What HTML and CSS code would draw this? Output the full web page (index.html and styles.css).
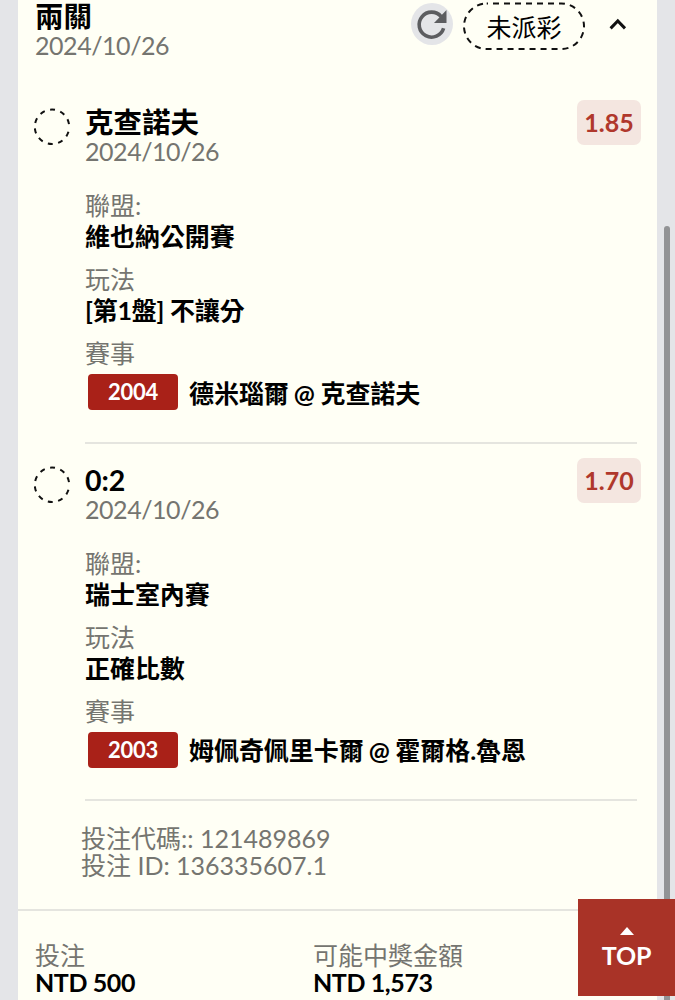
FILE: index.html
```html
<!DOCTYPE html>
<html lang="zh-Hant">
<head>
    <meta charset="UTF-8">
    <meta name="viewport" content="width=device-width, initial-scale=1.0">
    <title>投注紀錄</title>
    <link rel="stylesheet" href="styles.css">
</head>
<body>
    <div class="card">
        <div class="card-header">
            <div class="heading">
                <div class="title">兩關</div>
                <div class="date">2024/10/26</div>
            </div>
            <div class="refresh">
                <svg width="43" height="43" viewBox="0 0 43 43">
                    <path d="M32.6 25.3 A12.5 12.5 0 1 1 30.2 13.6" fill="none" stroke="#5c5d60" stroke-width="3.6"/>
                    <path d="M35.5 7 V20 H23 Z" fill="#5c5d60"/>
                </svg>
            </div>
            <div class="status">
                <svg class="status-outline" width="122" height="48" viewBox="0 0 122 48">
                    <rect x="1" y="1.5" width="120" height="45.5" rx="22.7"/>
                </svg>
                未派彩
            </div>
            <svg class="chevron" width="18" height="12" viewBox="0 0 18 12">
                <path d="M1.6 10.4 L8.8 3 L16 10.4"/>
            </svg>
        </div>

        <div class="bet">
            <svg class="pending" width="37" height="37" viewBox="0 0 37 37">
                <circle cx="18" cy="18.8" r="17.2"/>
            </svg>
            <div class="bet-body">
                <div class="title">克查諾夫</div>
                <div class="date">2024/10/26</div>
                <div class="field">
                    <div class="label">聯盟:</div>
                    <div class="value">維也納公開賽</div>
                </div>
                <div class="field">
                    <div class="label">玩法</div>
                    <div class="value tight">[第1盤] 不讓分</div>
                </div>
                <div class="field">
                    <div class="label">賽事</div>
                    <div class="match"><span class="match-id">2004</span><span class="value">德米瑙爾 <span class="at">@</span> 克查諾夫</span></div>
                </div>
            </div>
            <div class="odds">1.85</div>
        </div>

        <div class="bet">
            <svg class="pending" width="37" height="37" viewBox="0 0 37 37">
                <circle cx="18" cy="18.8" r="17.2"/>
            </svg>
            <div class="bet-body">
                <div class="title">0:2</div>
                <div class="date">2024/10/26</div>
                <div class="field">
                    <div class="label">聯盟:</div>
                    <div class="value">瑞士室內賽</div>
                </div>
                <div class="field">
                    <div class="label">玩法</div>
                    <div class="value">正確比數</div>
                </div>
                <div class="field">
                    <div class="label">賽事</div>
                    <div class="match"><span class="match-id">2003</span><span class="value">姆佩奇佩里卡爾 <span class="at">@</span> 霍爾格.魯恩</span></div>
                </div>
            </div>
            <div class="odds">1.70</div>
        </div>

        <div class="codes">
            <div>投注代碼:: 121489869</div>
            <div>投注 ID: 136335607.1</div>
        </div>

        <div class="totals">
            <div>
                <div class="label">投注</div>
                <div class="amount">NTD 500</div>
            </div>
            <div>
                <div class="label">可能中獎金額</div>
                <div class="amount">NTD 1,573</div>
            </div>
        </div>
    </div>

    <div class="scrollbar"></div>
    <div class="to-top">
        <div class="arrow"></div>
        TOP
    </div>
</body>
</html>
```

FILE: styles.css
```css
* {
    box-sizing: border-box;
}
body {
    margin: 0;
    height: 1000px;
    overflow: hidden;
    background: #e4e5e8;
    color: #000;
    font-family: Lato, "Noto Sans CJK TC", sans-serif;
    font-size: 25px;
}
.card {
    width: 639px;
    height: 1000px;
    margin-left: 18px;
    background: #fffff5;
}
.card-header {
    display: flex;
    align-items: flex-start;
    height: 100px;
    padding: 2px 30px 0 17px;
}
.heading {
    flex: 1;
    margin-top: -1px;
}
.title {
    font-size: 28.5px;
    font-weight: 700;
    line-height: 30px;
}
.date {
    line-height: 29px;
    letter-spacing: -0.45px;
    color: #757570;
}
.refresh {
    width: 42px;
    height: 42px;
    margin: 1px 10px 0 0;
    border-radius: 50%;
    background: #e4e5e8;
}
.status {
    position: relative;
    width: 122px;
    height: 48px;
    line-height: 50px;
    text-align: center;
}
.status-outline {
    position: absolute;
    left: 0;
    top: 0;
}
.status-outline rect {
    fill: none;
    stroke: #111;
    stroke-width: 2;
    stroke-dasharray: 6 5;
    stroke-dashoffset: -6.3;
}
.chevron {
    margin: 16px 0 0 24px;
}
.chevron path {
    fill: none;
    stroke: #111;
    stroke-width: 3;
}
.bet {
    display: flex;
    align-items: flex-start;
    height: 357.5px;
    padding: 0 16px 0 16px;
}
.pending {
    margin: 8px 14px 0 0;
}
.pending circle {
    fill: none;
    stroke: #111;
    stroke-width: 2;
    stroke-dasharray: 5 5.5;
    stroke-dashoffset: -5.1;
}
.bet-body {
    flex: 1;
    height: 343.5px;
    padding-top: 7px;
    margin-right: -60px;
    border-bottom: 2px solid #e5e5df;
}
.bet-body .date {
    margin-bottom: 24px;
}
.odds {
    width: 64px;
    height: 45px;
    border-radius: 7px;
    background: #f4e6e0;
    color: #b0382c;
    font-weight: 700;
    line-height: 45px;
    text-align: center;
}
.field {
    margin-bottom: 12px;
    line-height: 31px;
}
.label {
    color: #757570;
}
.value {
    font-weight: 700;
    letter-spacing: -0.05px;
}
.tight {
    letter-spacing: -0.2px;
}
.at {
    margin-left: -1px;
    font-weight: 700;
    letter-spacing: -0.5px;
}
.match {
    display: flex;
    align-items: center;
    height: 36px;
    margin: 5px 0 0 3px;
}
.match .value {
    padding-top: 2px;
}
.match-id {
    width: 90px;
    height: 36px;
    margin-right: 11px;
    border-radius: 4px;
    background: #a92118;
    color: #fff;
    font-size: 22px;
    font-weight: 700;
    letter-spacing: -0.3px;
    line-height: 36px;
    text-align: center;
}
.codes {
    height: 96px;
    padding: 10px 0 0 63px;
    border-bottom: 2px solid #e5e5df;
    color: #757570;
    line-height: 27px;
}
.totals {
    display: grid;
    grid-template-columns: 278px 1fr;
    padding: 31px 0 0 17px;
    line-height: 27px;
}
.amount {
    font-weight: 700;
    letter-spacing: -0.4px;
}
.scrollbar {
    position: fixed;
    top: 226px;
    bottom: -10px;
    right: 5px;
    width: 6px;
    border-radius: 3px;
    background: #929395;
}
.to-top {
    position: fixed;
    right: 0;
    top: 899px;
    width: 97px;
    height: 97px;
    padding-top: 28px;
    background: #a93327;
    color: #fff;
    font-weight: 700;
    line-height: 41px;
    letter-spacing: -0.2px;
    text-align: center;
}
.arrow {
    width: 0;
    margin: 0 auto;
    border: 7px solid transparent;
    border-top: 0;
    border-bottom: 8px solid #fff;
}
```
